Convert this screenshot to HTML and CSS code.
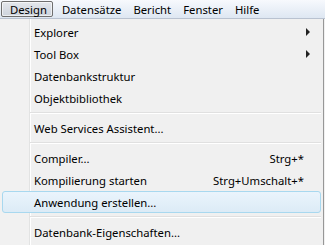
FILE: index.html
```html
<!doctype html>
<html><head><meta charset="UTF-8"><link rel="stylesheet" href="styles.css"></head>
<body>
  <div class="menubar">
    <div class="top aktiv">Design</div>
    <div class="top">Datens&auml;tze</div>
    <div class="top">Bericht</div>
    <div class="top">Fenster</div>
    <div class="top">Hilfe</div>
  </div>
  <div class="dropdown">
    <div class="eintrag"><span class="text">Explorer</span><span class="pfeil"></span></div>
    <div class="eintrag"><span class="text">Tool Box</span><span class="pfeil"></span></div>
    <div class="eintrag"><span class="text">Datenbankstruktur</span></div>
    <div class="eintrag"><span class="text">Objektbibliothek</span></div>
    <div class="trenner"></div>
    <div class="eintrag"><span class="text">Web Services Assistent...</span></div>
    <div class="trenner"></div>
    <div class="eintrag"><span class="text">Compiler...</span><span class="kurz">Strg+*</span></div>
    <div class="eintrag"><span class="text">Kompilierung starten</span><span class="kurz">Strg+Umschalt+*</span></div>
    <div class="eintrag hover"><span class="text">Anwendung erstellen...</span></div>
    <div class="trenner"></div>
    <div class="eintrag"><span class="text">Datenbank-Eigenschaften...</span></div>
  </div>
</body></html>
```
FILE: styles.css
```css
* {box-sizing: border-box;}
body {margin:0;width:325px;height:245px;overflow:hidden;background:#f0f0f0;font-family:"Noto Sans","Open Sans",sans-serif;font-size:11.3px;color:#000;}
.menubar {height:19px;display:flex;align-items:stretch;padding:1px 0 1px 1px;background:linear-gradient(#f7f9fd,#dee7f2);border-bottom:1px solid #b9c2d0;}
.top {padding:0 5px;line-height:15px;border:1px solid transparent;}
.top.aktiv {border-color:#6f6f6f;border-radius:2px;background:linear-gradient(#e4e7ec,#cdd3dc);box-shadow:inset 0 0 0 1px rgba(255,255,255,0.6);padding:0 5px 0 8px;margin-right:3px;}
.dropdown {width:324px;padding:2px;border-right:1px solid #979797;background:linear-gradient(to right,#f1f1f1 0,#f1f1f1 29px,#e2e3e3 29px,#e2e3e3 30px,#fff 30px,#fff 31px,#f0f0f0 31px);}
.eintrag {height:22px;display:flex;align-items:center;padding:0 10px 0 31px;border:1px solid transparent;border-radius:3px;}
.eintrag .text {flex:1;}
.kurz {padding-right:6px;}
.pfeil {width:0;height:0;border-top:4px solid transparent;border-bottom:4px solid transparent;border-left:4px solid #222;}
.hover {border-color:#a8d8ef;background:linear-gradient(#eaf4fc,#dcebf6);}
.trenner {height:8px;margin-left:28px;background:linear-gradient(transparent 3px,#e0e0e0 3px,#e0e0e0 4px,#fff 4px,#fff 5px,transparent 5px);}
```
